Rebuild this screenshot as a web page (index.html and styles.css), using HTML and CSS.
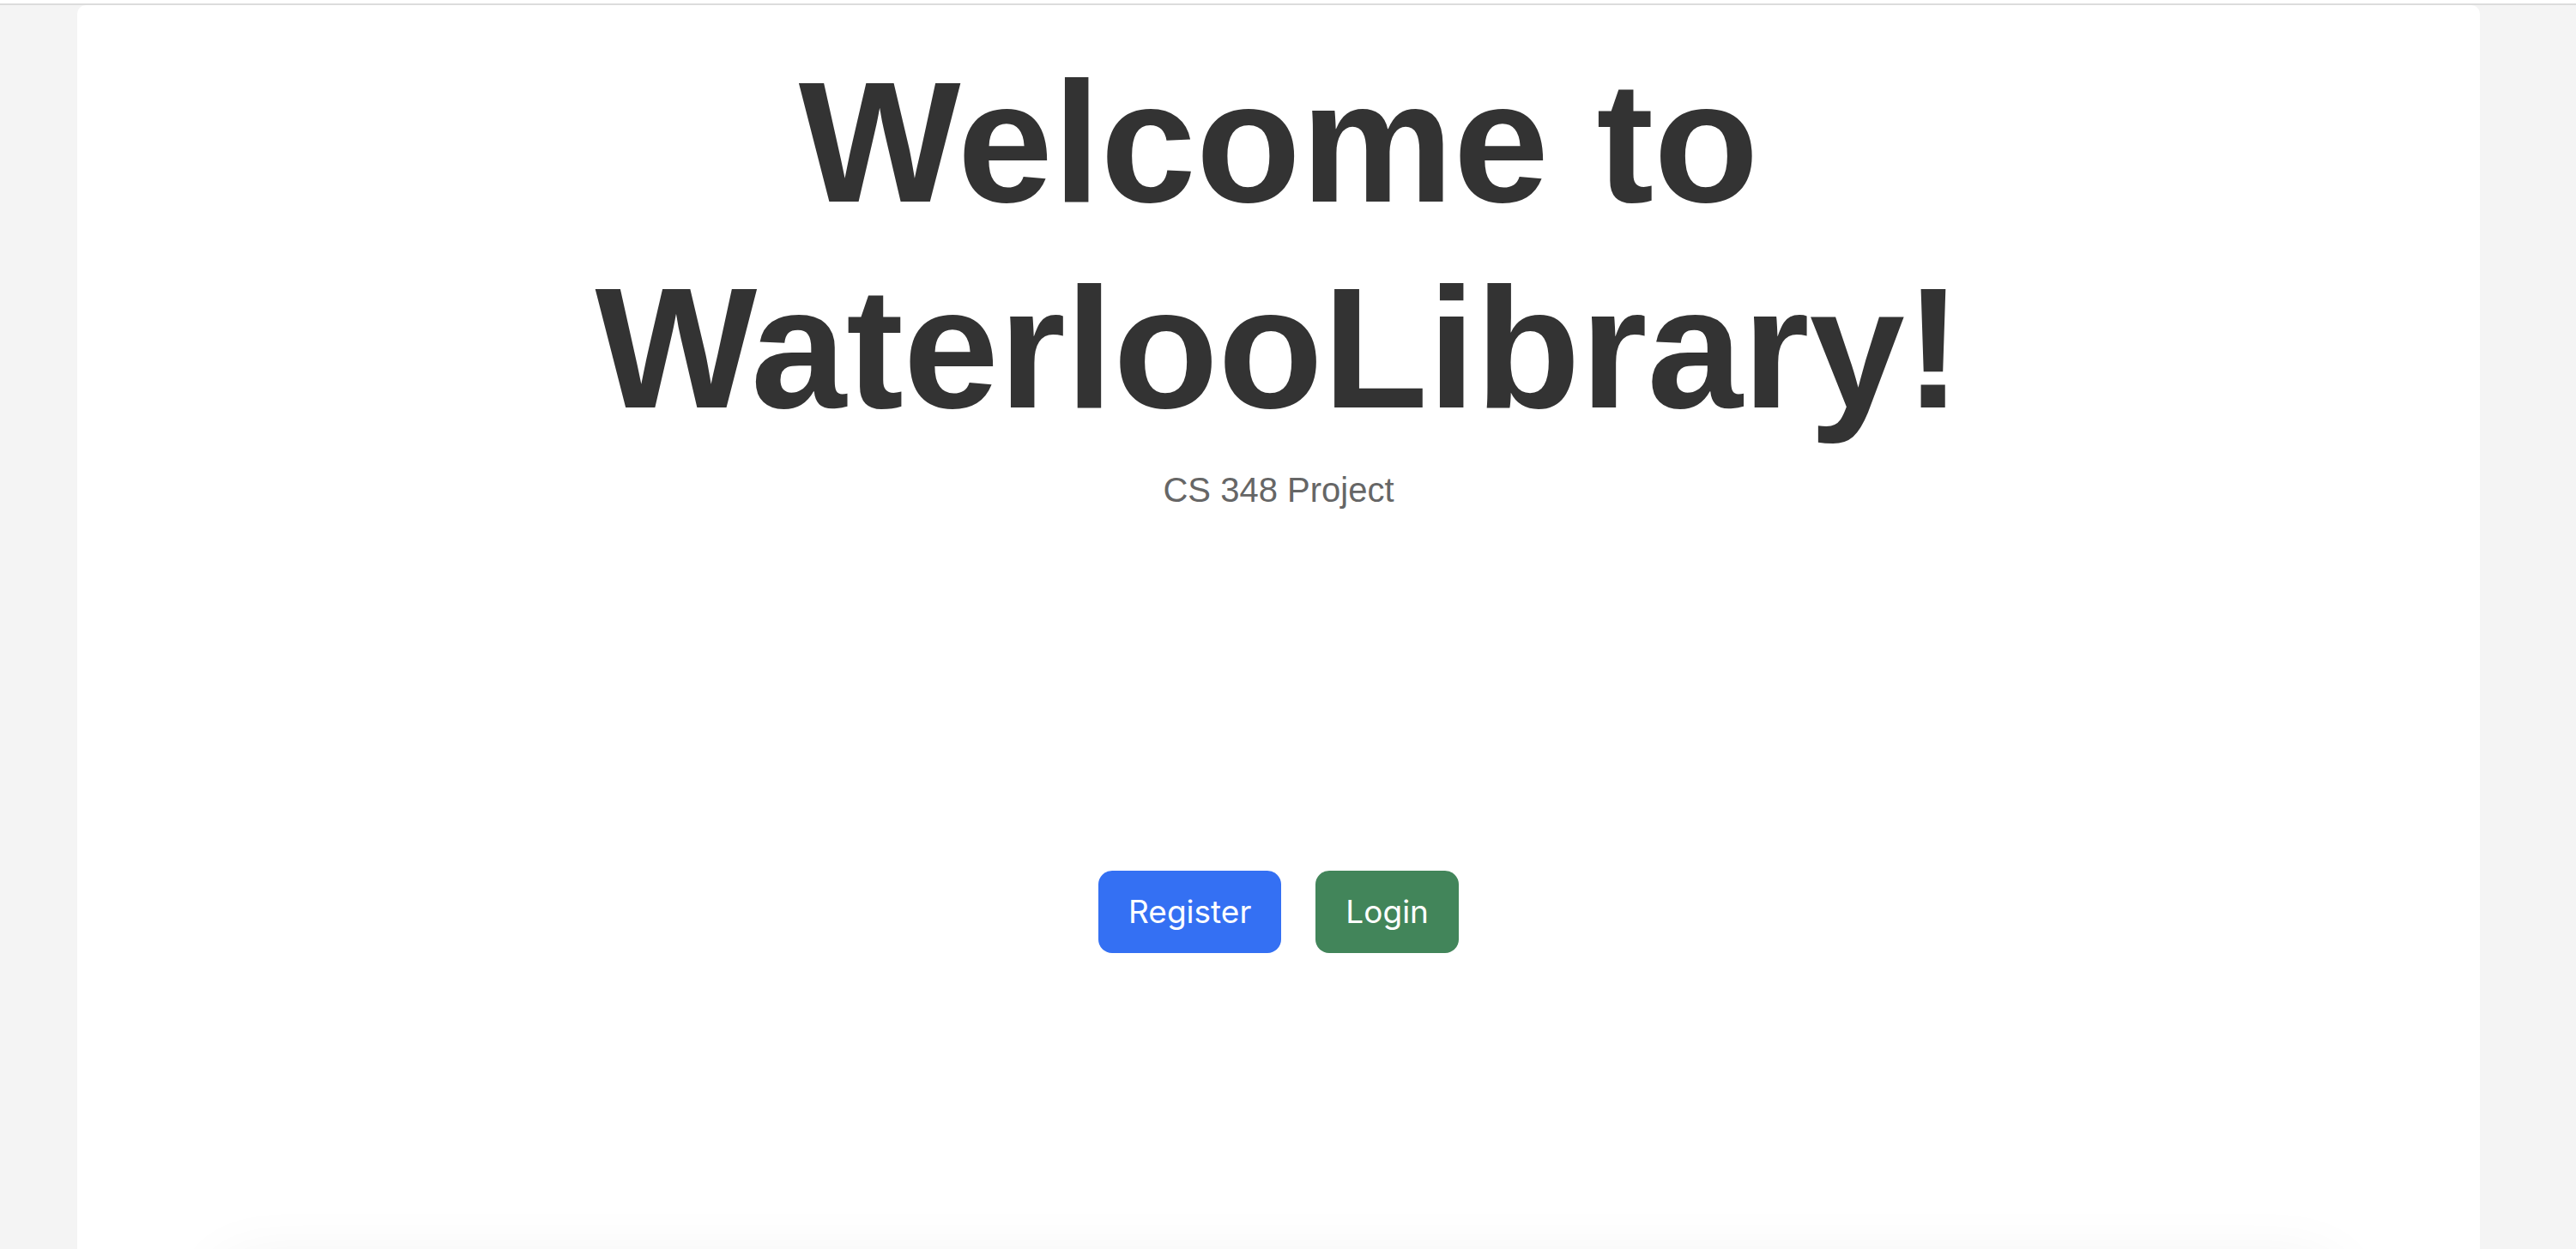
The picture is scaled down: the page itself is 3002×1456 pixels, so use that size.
FILE: index.html
```html
<!DOCTYPE html>
<html lang="en">
<head>
<meta charset="utf-8">
<title>WaterlooLibrary</title>
<link rel="stylesheet" href="styles.css">
</head>
<body>
<div class="topline"></div>
<div class="page">
  <main class="card">
    <section class="hero">
      <h1 class="title">Welcome to WaterlooLibrary!</h1>
      <p class="subtitle">CS 348 Project</p>
      <div class="actions">
        <a class="btn btn-register" href="#">Register</a>
        <a class="btn btn-login" href="#">Login</a>
      </div>
    </section>
    <section class="panel"></section>
  </main>
</div>
</body>
</html>
```

FILE: styles.css
```css
html, body {
  margin: 0;
  padding: 0;
}
body {
  background: #f4f4f4;
  font-family: "Liberation Sans", Arial, sans-serif;
  overflow: hidden;
  height: 1456px;
}
.topline {
  height: 4px;
  background: #ffffff;
  border-bottom: 2px solid #dcdcdc;
}
.page {
  padding: 0 112px 0 90px;
}
.card {
  background: #ffffff;
  border-radius: 10px 10px 0 0;
  min-height: 1900px;
  display: flex;
  flex-direction: column;
  align-items: stretch;
}
.hero {
  padding-top: 40px;
  text-align: center;
}
.title {
  margin: 0 auto;
  max-width: 2000px;
  font-family: "Liberation Sans", Arial, sans-serif;
  font-weight: 700;
  font-size: 200px;
  line-height: 240px;
  color: #333333;
}
.subtitle {
  margin: 23px 0 0;
  font-size: 40px;
  line-height: 45px;
  color: #666666;
}
.actions {
  margin-top: 421px;
  display: flex;
  justify-content: center;
  gap: 40px;
}
.btn {
  display: inline-block;
  font-family: Inter, "Noto Sans", sans-serif;
  font-size: 37px;
  line-height: 60px;
  padding: 18px 35px;
  border-radius: 16px;
  color: #ffffff;
  text-decoration: none;
}
.btn-register {
  background: #3470f3;
}
.btn-login {
  background: #42855a;
}
.panel {
  margin: 365px 170px 0;
  height: 400px;
  border-radius: 20px;
  background: #ffffff;
  box-shadow: 0 0 80px rgba(0, 0, 0, 0.07);
}
```
